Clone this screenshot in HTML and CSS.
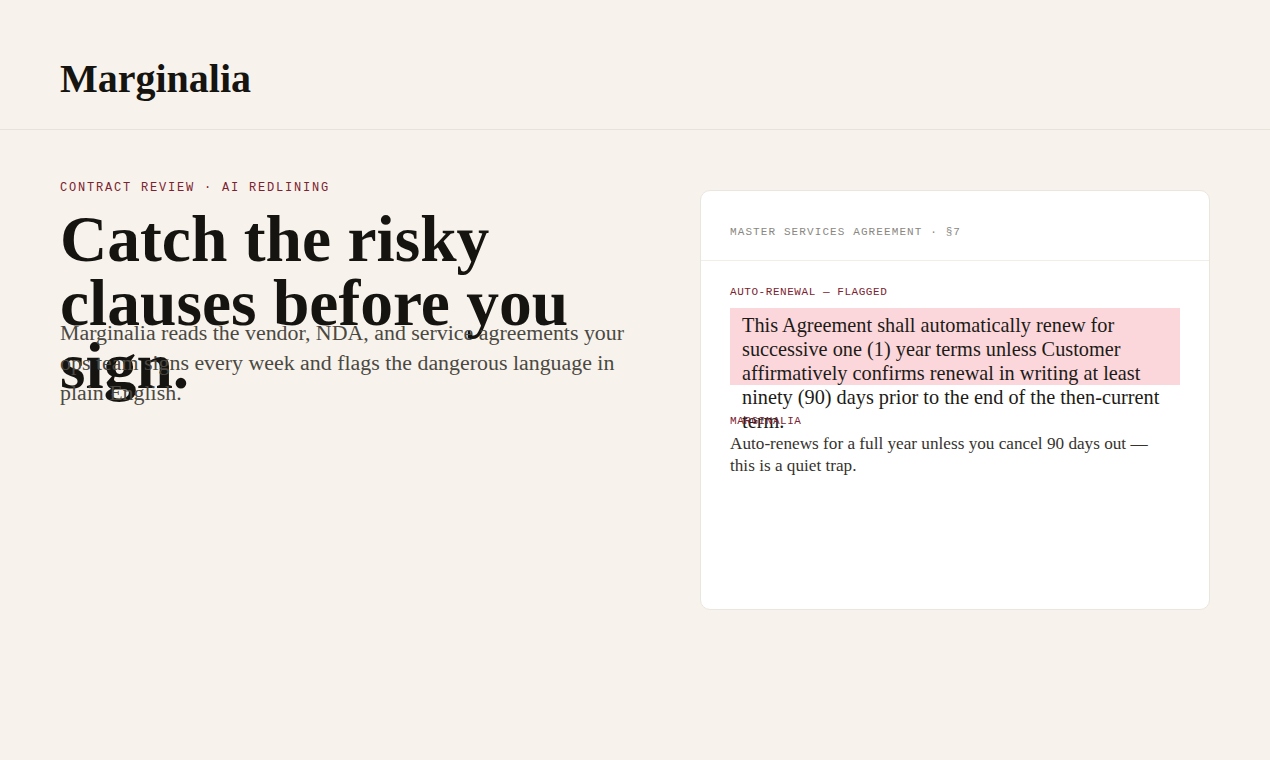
FILE: index.html
```html
<!DOCTYPE html>
<html lang="en">
<head>
<meta charset="utf-8">
<title>Marginalia</title>
<link rel="stylesheet" href="styles.css">
</head>
<body>
<header class="site-header">
  <div class="logo">Marginalia</div>
</header>
<main class="hero">
  <section class="hero-copy">
    <div class="eyebrow">CONTRACT REVIEW · AI REDLINING</div>
    <h1 class="headline">Catch the risky clauses before you sign.</h1>
    <p class="lede">Marginalia reads the vendor, NDA, and service agreements your ops team signs every week and flags the dangerous language in plain English.</p>
  </section>
  <aside class="card">
    <div class="card-head">MASTER SERVICES AGREEMENT · §7</div>
    <div class="card-body">
      <div class="flag-label">AUTO-RENEWAL — FLAGGED</div>
      <div class="clause">This Agreement shall automatically renew for successive one (1) year terms unless Customer affirmatively confirms renewal in writing at least ninety (90) days prior to the end of the then-current term.</div>
      <div class="note-label">MARGINALIA</div>
      <p class="note">Auto-renews for a full year unless you cancel 90 days out — this is a quiet trap.</p>
    </div>
  </aside>
</main>
</body>
</html>
```
FILE: styles.css
```css
html, body {
  margin: 0;
  padding: 0;
}
body {
  background: #f7f3ec;
  color: #161410;
  font-family: "Liberation Serif", "Times New Roman", serif;
  width: 1270px;
  height: 760px;
  overflow: hidden;
}
.site-header {
  height: 130px;
  box-sizing: border-box;
  border-bottom: 1px solid #e8e3da;
  padding: 28px 60px 0;
  display: flex;
  align-items: center;
}
.logo {
  font-size: 40px;
  font-weight: 700;
  line-height: 40px;
}
.hero {
  display: grid;
  grid-template-columns: 1fr 510px;
  column-gap: 40px;
  padding: 50px 60px 0;
  align-items: start;
}
.eyebrow {
  font-family: "Liberation Mono", "Courier New", monospace;
  font-size: 12px;
  letter-spacing: 0.15em;
  line-height: 16px;
  color: #7b2230;
  margin-bottom: 12px;
}
.headline {
  font-size: 65.5px;
  line-height: 63.5px;
  font-weight: 700;
  margin: 0 0 20px;
  height: 90px;
  max-width: 580px;
}
.lede {
  margin: 0;
  font-size: 21.9px;
  line-height: 30px;
  color: #4b4842;
  max-width: 580px;
}
.card {
  margin-top: 10px;
  background: #fff;
  border: 1px solid #ebe6dd;
  border-radius: 10px;
  height: 420px;
  box-sizing: border-box;
}
.card-head {
  font-family: "Liberation Mono", "Courier New", monospace;
  font-size: 11px;
  letter-spacing: 0.1em;
  line-height: 16px;
  color: #8a8782;
  padding: 33px 29px 20px;
  border-bottom: 1px solid #f1eee8;
}
.card-body {
  padding: 23px 29px 0;
}
.flag-label, .note-label {
  font-family: "Liberation Mono", "Courier New", monospace;
  font-size: 11px;
  letter-spacing: 0.05em;
  line-height: 16px;
  color: #7b2230;
}
.clause {
  margin-top: 8px;
  background: #fbd7dc;
  height: 77px;
  box-sizing: border-box;
  padding: 5px 12px 0;
  font-size: 20.3px;
  line-height: 24px;
  color: #1d1b17;
}
.note-label {
  margin-top: 28px;
}
.note {
  margin: 4px 0 0;
  padding-right: 12px;
  font-size: 17.2px;
  line-height: 22px;
  color: #36332e;
}
```
